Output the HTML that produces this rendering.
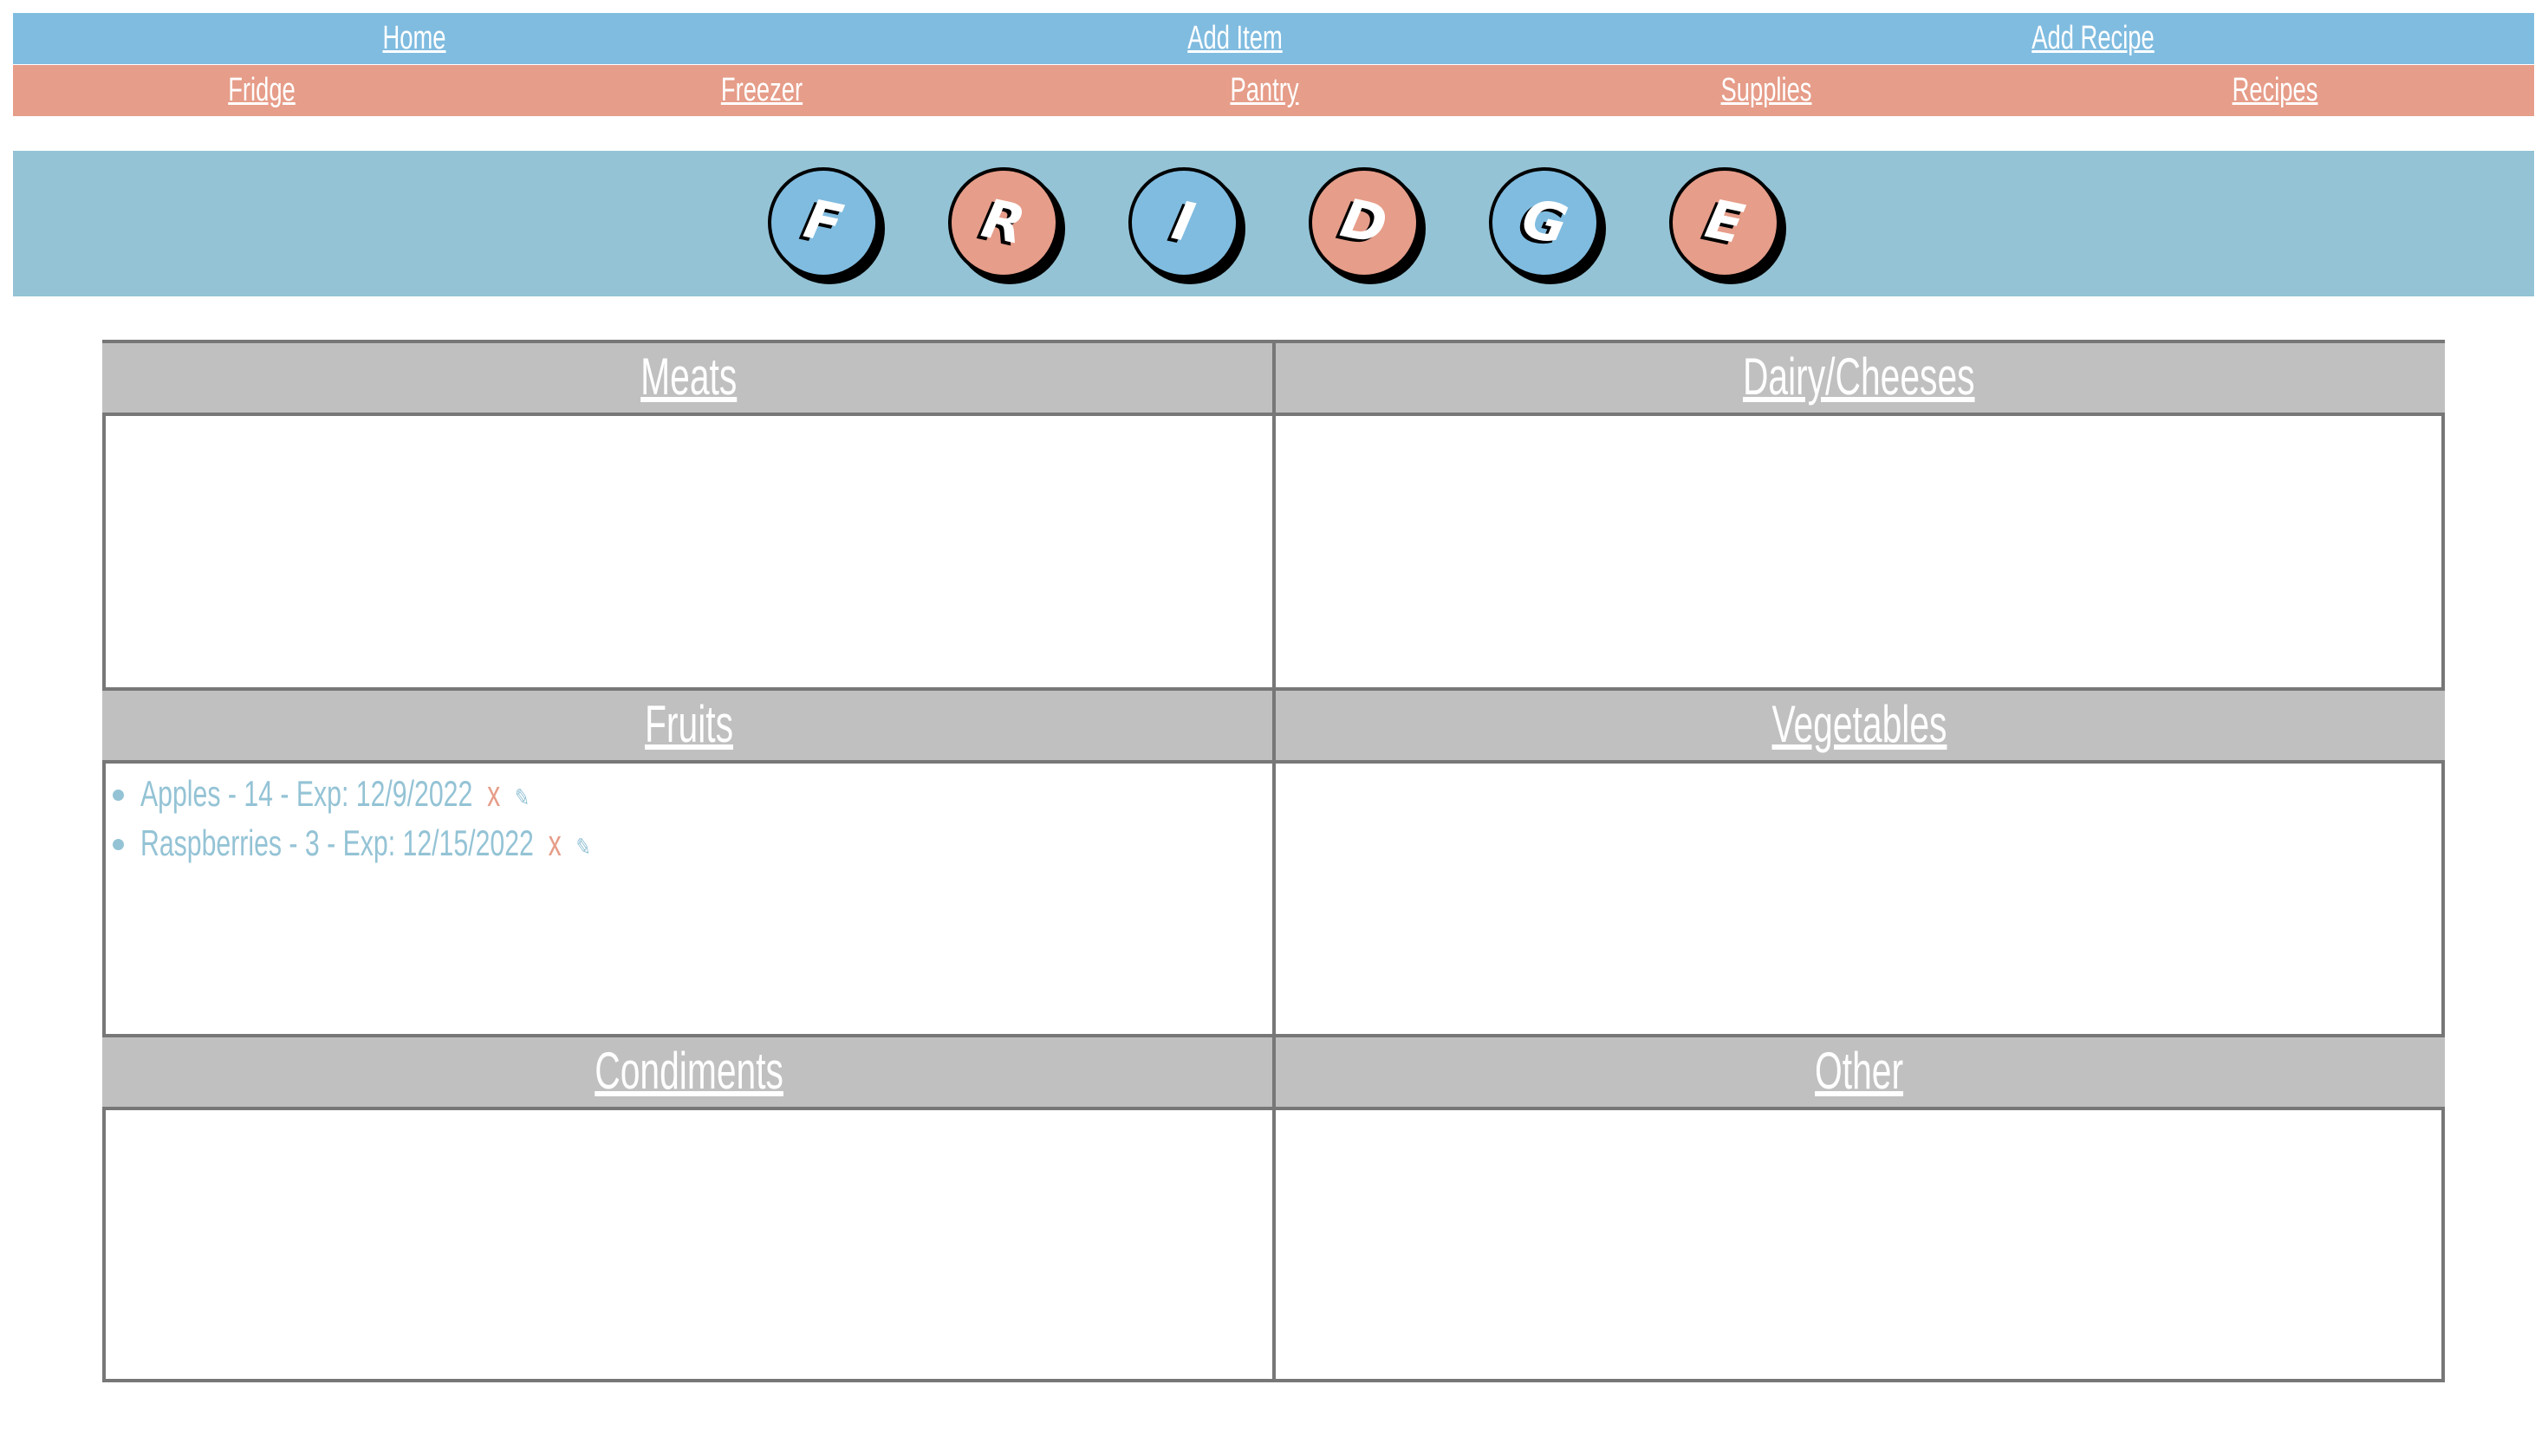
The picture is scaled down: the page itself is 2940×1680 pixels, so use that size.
<!DOCTYPE html>
<html><head><style>
body{margin:0;width:2940px;height:1680px;background:#fff;font-family:"Liberation Sans",sans-serif;position:relative;overflow:hidden}
.bar{position:absolute;left:15px;width:2909px;height:59px}
.l{position:absolute;color:#fff;text-decoration:underline;font-size:38px;top:8px;transform:translateX(-50%) scaleX(0.72);white-space:nowrap}
#ban{position:absolute;left:15px;top:174px;width:2909px;height:168px;background:#94c3d5}
.c{position:absolute;top:193px;width:128px;height:128px;border-radius:50%;border:4px solid #000;box-shadow:7px 7px 0 #000;box-sizing:border-box;color:#fff;font:bold italic 62px "DejaVu Sans",sans-serif;text-align:center;line-height:118px;text-shadow:-4px 4px 0 #000}
.c span{display:inline-block;transform:rotate(12deg)}
.b{background:#80bce0}.s{background:#e69d89}
.g{position:absolute;left:118px;top:392px;width:2703px;height:1203px;border:4px solid #777;box-sizing:border-box}
.h{position:absolute;height:88px;background:#c0c0c0;border-top:4px solid #777;border-bottom:4px solid #777;box-sizing:border-box;color:#fff;font-size:60px;line-height:78px;text-align:center}
.h span{display:inline-block;transform:scaleX(0.68);text-decoration:underline}
.v{position:absolute;left:1468px;top:392px;width:4px;height:1203px;background:#777}
ul{position:absolute;left:118px;top:880px;margin:10px 0 0;padding-left:44px;color:#94c3d5;font-size:42px;line-height:52px;white-space:nowrap}
li span.t{display:inline-block;transform:scaleX(0.72);transform-origin:left}
</style></head><body>
<div class="bar" style="top:15px;background:#80bce0">
<a class="l" style="left:463px">Home</a><a class="l" style="left:1410px">Add Item</a><a class="l" style="left:2400px">Add Recipe</a></div>
<div class="bar" style="top:75px;background:#e69d89">
<a class="l" style="left:287px">Fridge</a><a class="l" style="left:864px">Freezer</a><a class="l" style="left:1444px">Pantry</a><a class="l" style="left:2023px">Supplies</a><a class="l" style="left:2610px">Recipes</a></div>
<div id="ban"></div>
<div class="c b" style="left:886px"><span>F</span></div>
<div class="c s" style="left:1094px"><span>R</span></div>
<div class="c b" style="left:1302px"><span>I</span></div>
<div class="c s" style="left:1510px"><span>D</span></div>
<div class="c b" style="left:1718px"><span>G</span></div>
<div class="c s" style="left:1926px"><span>E</span></div>
<div class="g"></div>
<div class="h" style="left:118px;width:2703px;top:392px"></div>
<div class="h" style="left:118px;width:2703px;top:793px"></div>
<div class="h" style="left:118px;width:2703px;top:1193px"></div>
<div class="v"></div>
<div class="h" style="left:122px;width:1346px;top:392px;border:none;height:80px;top:396px"><span>Meats</span></div>
<div class="h" style="left:1472px;width:1346px;top:396px;border:none;height:80px"><span>Dairy/Cheeses</span></div>
<div class="h" style="left:122px;width:1346px;top:797px;border:none;height:80px"><span>Fruits</span></div>
<div class="h" style="left:1472px;width:1346px;top:797px;border:none;height:80px"><span>Vegetables</span></div>
<div class="h" style="left:122px;width:1346px;top:1197px;border:none;height:80px"><span>Condiments</span></div>
<div class="h" style="left:1472px;width:1346px;top:1197px;border:none;height:80px"><span>Other</span></div>
<ul><li><span class="t">Apples - 14 - Exp: 12/9/2022 &nbsp;<span style="color:#e69d89">x</span> &nbsp;<span style="font-size:28px">✎</span></span></li><li><span class="t">Raspberries - 3 - Exp: 12/15/2022 &nbsp;<span style="color:#e69d89">x</span> &nbsp;<span style="font-size:28px">✎</span></span></li></ul>
</body></html>
